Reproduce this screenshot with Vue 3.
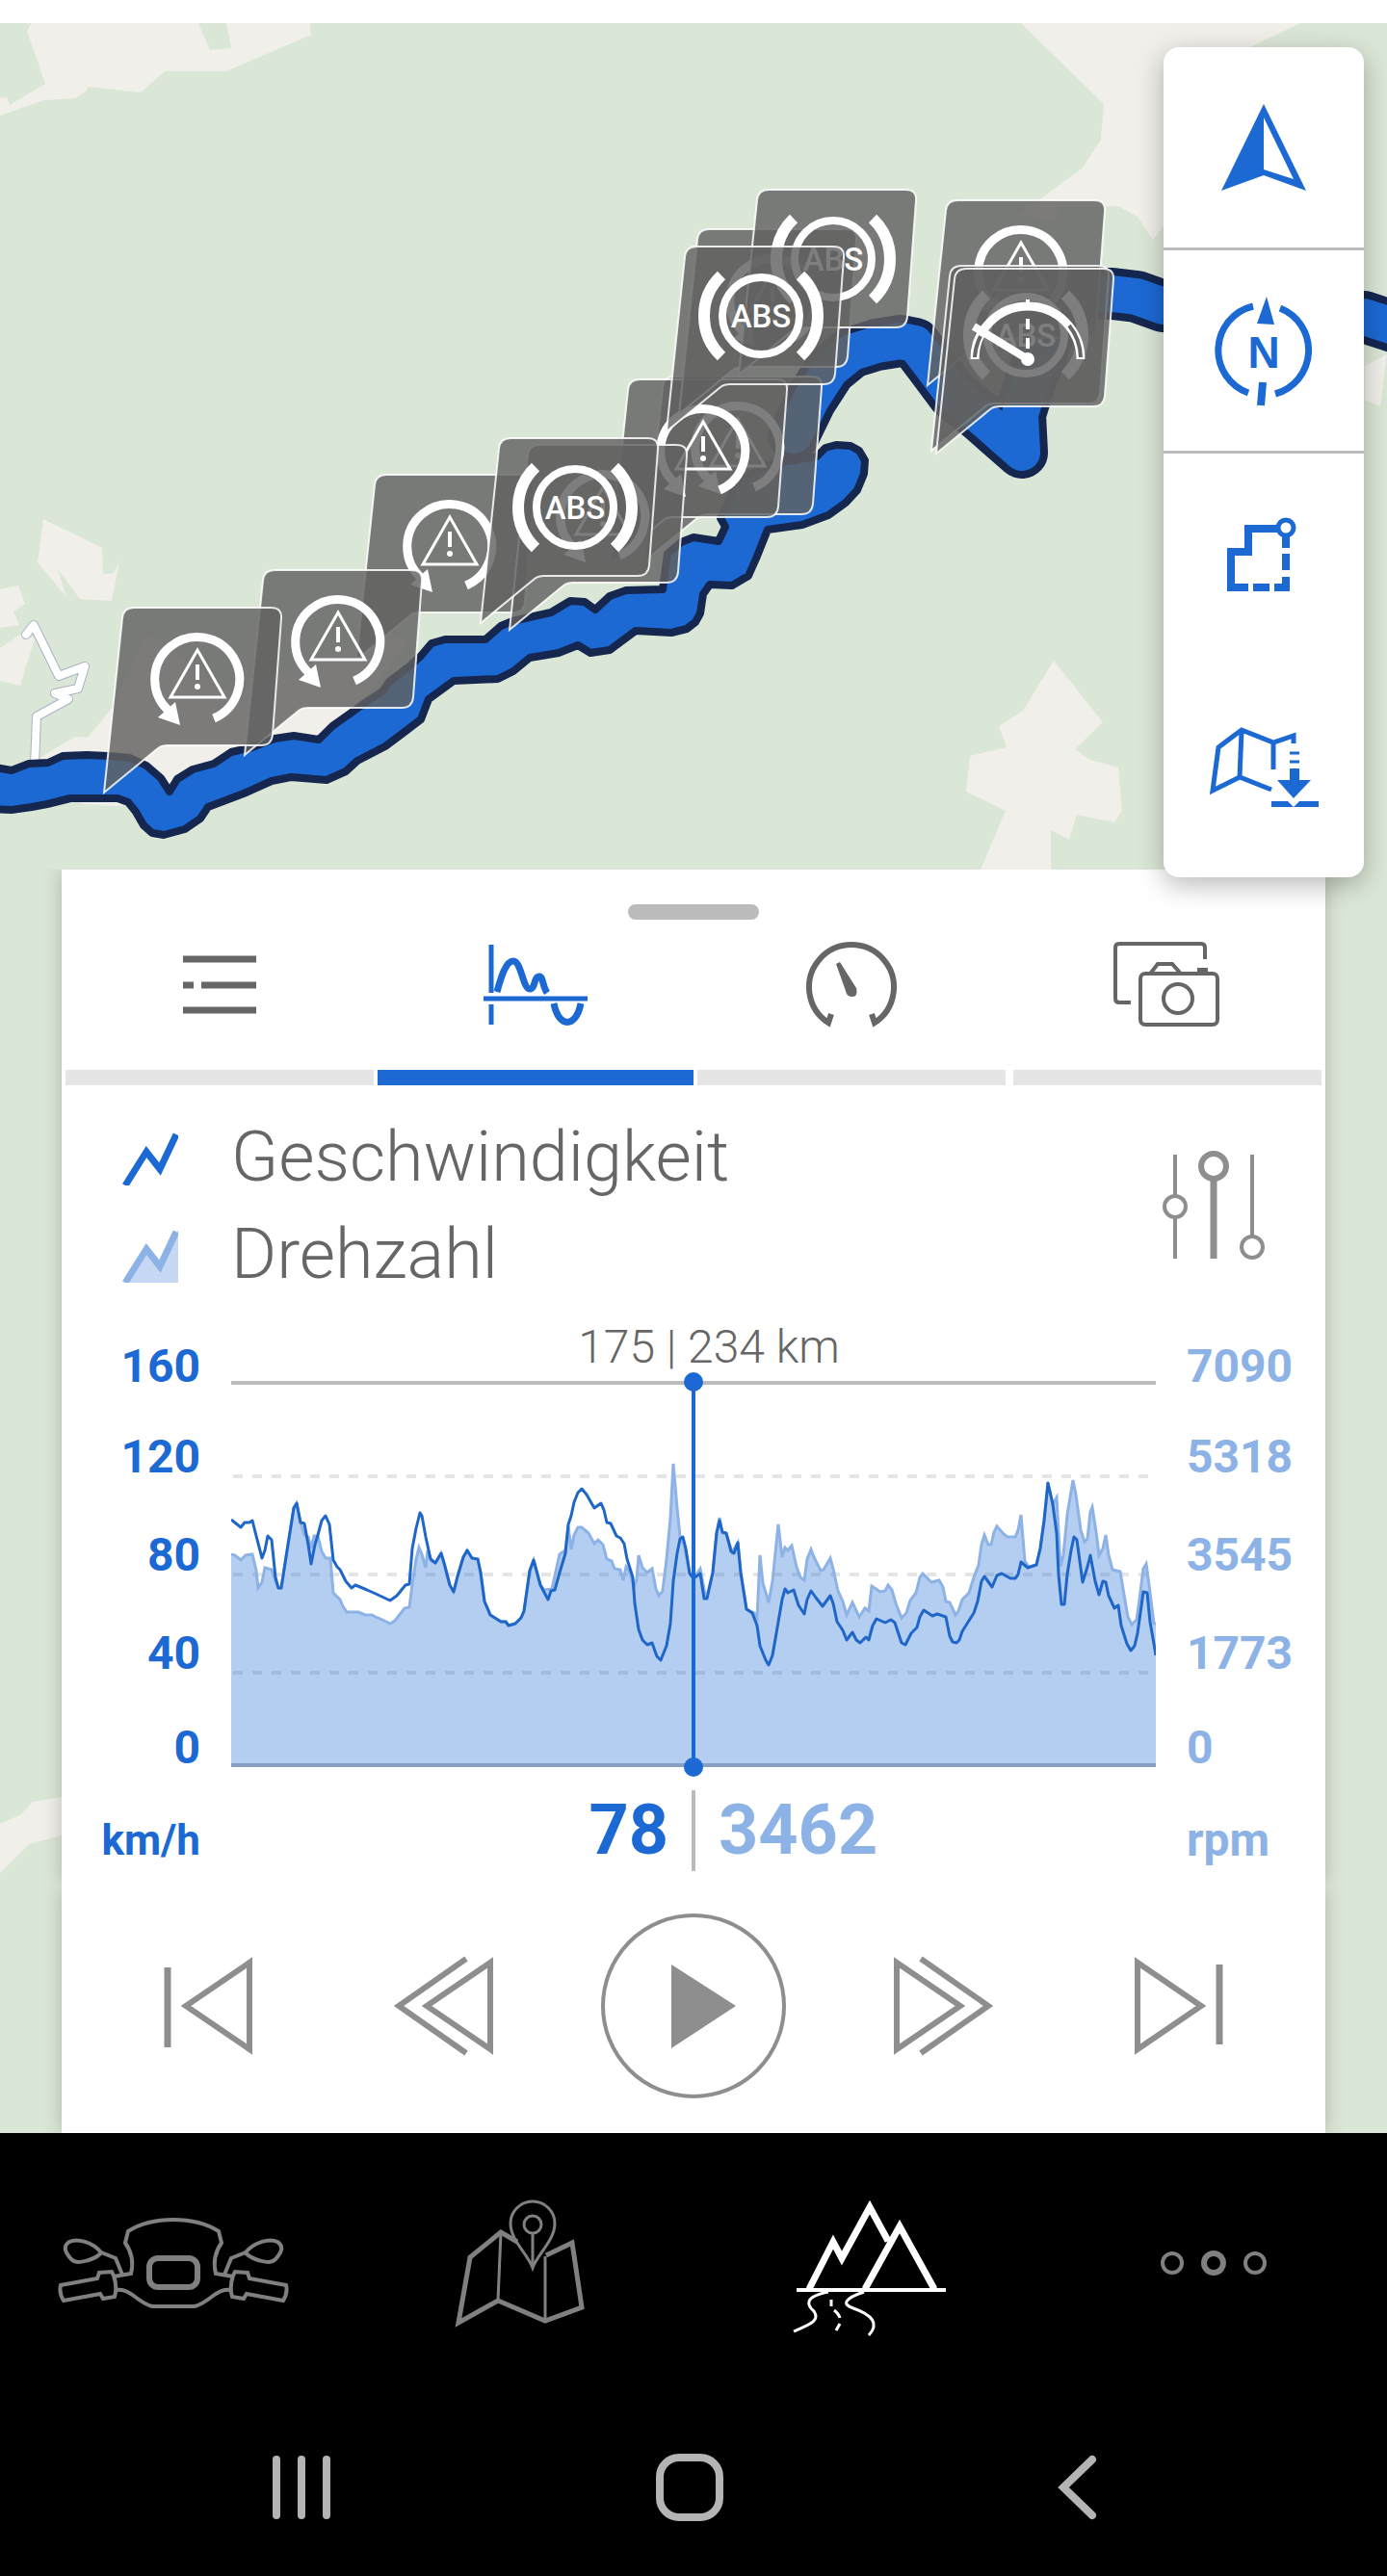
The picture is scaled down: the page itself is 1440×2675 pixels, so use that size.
<template>
  <div class="app">
    <main class="stage">
      <!-- Map -->
      <svg class="map" viewBox="0 24 1440 2191" preserveAspectRatio="xMidYMin slice" aria-label="Karte">
        <g class="land">
          <polygon v-for="(shape, i) in land" :key="i" :points="shape" />
        </g>
        <polyline class="path-edge" :points="sideRoad" />
        <polyline class="path-fill" :points="sideRoad" />
        <polyline class="route-edge" :points="upperRoute" />
        <polyline class="route-fill" :points="upperRoute" />
        <polygon class="route-main" :points="mainRoute" />

        <g v-for="(m, i) in markers" :key="'m' + i" :transform="`translate(${m.x} ${m.y})`">
          <path class="marker" d="M0 0L19-181Q20-192 31-192H173Q185-192 184-181L175-60Q174-49 163-49H66Q60-49 56-46Z" />
          <g v-if="m.type === 'warn'" class="marker-icon" transform="translate(97 -118)">
            <path stroke-width="9" d="M-30 33A44 44 0 1 1 17 41" />
            <path class="solid" d="M-18 48L-23 24L-41 40Z" />
            <path stroke-width="3" d="M0-30L28 19H-28Z" />
            <path stroke-width="4" d="M0-15V1" />
            <circle class="solid" cy="8" r="3" />
          </g>
          <g v-else-if="m.type === 'abs'" class="marker-icon" transform="translate(98 -120)">
            <circle r="40" stroke-width="8" />
            <path stroke-width="12" d="M-41-42A58 58 0 0 0-41 42M41-42A58 58 0 0 1 41 42" />
            <text y="12" text-anchor="middle">ABS</text>
          </g>
          <g v-else class="marker-icon" transform="translate(95 -98)">
            <path stroke-width="9" d="M-55 0A55 55 0 0 1 55 0" />
            <path class="gap" d="M-55-2A55 55 0 0 1-49-24M43-35A55 55 0 0 1 55-2" />
            <path stroke-width="4" stroke-dasharray="11 9" d="M0-62V-8" />
            <path stroke-width="8" d="M-56-34L0 0" />
            <circle class="solid" r="7" />
          </g>
        </g>
      </svg>

      <div class="toolbar">
        <button type="button" class="tool" aria-label="Position">
          <svg viewBox="0 0 208 208">
            <path class="blue-fill" fill-rule="evenodd" d="M104 59L60 149L104 133L148 149ZM104 73L135 137L104 127Z" />
          </svg>
        </button>
        <button type="button" class="tool" aria-label="Norden">
          <svg viewBox="0 0 208 208">
            <path class="blue-line" stroke-width="7" d="M93 58A47 47 0 0 0 88 148M121 60A47 47 0 0 1 116 149" />
            <path class="blue-fill" d="M107 48L97 76L115 77Z" />
            <path class="blue-line" stroke-width="8" d="M103 137L101 161" />
            <text class="north" x="104" y="122" text-anchor="middle">N</text>
          </svg>
        </button>
        <button type="button" class="tool tall" aria-label="Route">
          <svg viewBox="0 0 208 220">
            <path class="blue-line" stroke-width="8" d="M88 139H70V102H88V78H118" />
            <circle class="blue-line" stroke-width="5" cx="127" cy="77" r="8" />
            <path class="blue-line" stroke-width="8" d="M127 87V98M127 104V121M127 128V139M93 139H110M115 139H131" />
          </svg>
        </button>
        <button type="button" class="tool tall" aria-label="Karte herunterladen">
          <svg viewBox="0 0 208 220">
            <path class="blue-line" stroke-width="5" d="M112 129L79 116L51 130L57 85L81 67L114 80L135 73V81M81 68L79 116M114 80V108" />
            <path class="blue-line" stroke-width="3" d="M131 91H141M131 100H141" />
            <path class="blue-fill" d="M131 107H141V119H153L135 138L118 119H131Z" />
            <path class="blue-fill" d="M112 141H129L135 147L141 141H161V147H112Z" />
          </svg>
        </button>
      </div>

      <!-- Trip details -->
      <section class="sheet">
        <div class="handle"></div>
        <nav class="tabs">
          <button
            v-for="tab in tabs"
            :key="tab"
            type="button"
            class="tab"
            :class="{ active: tab === activeTab }"
            :aria-label="tab"
            @click="activeTab = tab"
          >
            <svg class="tab-icon" viewBox="0 0 120 104">
              <path v-if="tab === 'Liste'" stroke-width="7" d="M22 25H98M22 52H33M41 52H98M22 78H98" />
              <g v-else-if="tab === 'Diagramm'" stroke-width="5">
                <path d="M14 10V60M14 72V93M6 66H114" />
                <path stroke-width="7" d="M20 59C24 44 29 27 37 27C45 27 47 56 54 56C60 56 58 43 64 43C68 43 67 53 72 60M79 71C84 97 102 97 107 71" />
              </g>
              <g v-else-if="tab === 'Tacho'" stroke-width="6">
                <path d="M39 82L36 91A44 44 0 1 1 84 91L81 82" />
                <path class="needle" d="M44 30L48 28L65 55Q67 64 61 64Q55 64 54 58Z" />
              </g>
              <g v-else stroke-width="4">
                <path d="M99 25V13Q99 9 95 9H10Q6 9 6 13V66Q6 70 10 70H22" />
                <rect x="32" y="40" width="80" height="53" rx="5" />
                <path d="M43 39L50 30H65L73 39" />
                <path stroke-width="6" d="M91 37H102" />
                <circle cx="71" cy="66" r="15" />
              </g>
            </svg>
            <span class="tab-bar"></span>
          </button>
        </nav>

        <div class="legend">
          <ul class="legend-list">
            <li>
              <svg class="legend-icon" viewBox="0 0 58 58">
                <path class="blue-line" stroke-width="7" d="M3 58L25 23L39 41L56 5" />
              </svg>
              <span>Geschwindigkeit</span>
            </li>
            <li>
              <svg class="legend-icon" viewBox="0 0 58 58">
                <path class="rpm-soft" d="M3 58L25 23L39 41L58 3V58Z" />
                <path class="rpm-line" stroke-width="7" d="M3 58L25 23L39 41L56 5" />
              </svg>
              <span>Drehzahl</span>
            </li>
          </ul>
          <button type="button" class="filter" aria-label="Einstellungen">
            <svg viewBox="0 0 112 116">
              <path stroke-width="4" d="M16 5V48M16 70V113M96 5V90" />
              <path stroke-width="7" d="M56 30V113" />
              <circle stroke-width="4" cx="16" cy="59" r="11" />
              <circle stroke-width="6" cx="56" cy="17" r="13" />
              <circle stroke-width="4" cx="96" cy="101" r="11" />
            </svg>
          </button>
        </div>

        <div class="chart">
          <div class="axis axis-speed">
            <span v-for="v in speedAxis" :key="v">{{ v }}</span>
            <span class="unit">km/h</span>
          </div>
          <div class="chart-body">
            <p class="distance">175 | 234 km</p>
            <div class="plot">
              <svg viewBox="0 0 960 424" preserveAspectRatio="none">
                <path class="grid-line" d="M0 13H960M0 410H960" />
                <path class="grid-dash" d="M2 110H960M2 212H960M2 314H960" />
                <polygon class="rpm-area" :points="rpmArea" />
                <polyline class="rpm-line" stroke-width="3" :points="rpmPoints" />
                <polyline class="speed-line" :points="speedPoints" />
              </svg>
              <div class="cursor"></div>
            </div>
            <div class="reading">
              <strong class="reading-speed">78</strong>
              <i class="reading-divider"></i>
              <strong class="reading-rpm">3462</strong>
            </div>
          </div>
          <div class="axis axis-rpm">
            <span v-for="v in rpmAxis" :key="v">{{ v }}</span>
            <span>rpm</span>
          </div>
        </div>
      </section>

      <section class="player">
        <button type="button" class="skip" aria-label="Zum Anfang">
          <svg viewBox="0 0 160 104">
            <path stroke-width="7" d="M38 12V95" />
            <path stroke-width="6" d="M123 7L57 52L123 97Z" />
          </svg>
        </button>
        <button type="button" class="skip" aria-label="Zurück">
          <svg viewBox="0 0 160 104">
            <path stroke-width="6" d="M129 7L63 52L129 97Z" />
            <path stroke-width="6" d="M104 3L34 52L104 101" />
          </svg>
        </button>
        <button type="button" class="play" aria-label="Abspielen">
          <svg viewBox="0 0 192 192">
            <circle cx="96" cy="96" r="94" stroke-width="4" />
            <path class="play-fill" d="M73 53L140 96L73 140Z" />
          </svg>
        </button>
        <button type="button" class="skip" aria-label="Vor">
          <svg viewBox="0 0 160 104">
            <path stroke-width="6" d="M31 7L97 52L31 97Z" />
            <path stroke-width="6" d="M56 3L126 52L56 101" />
          </svg>
        </button>
        <button type="button" class="skip" aria-label="Zum Ende">
          <svg viewBox="0 0 160 104">
            <path stroke-width="6" d="M37 7L103 52L37 97Z" />
            <path stroke-width="7" d="M122 9V92" />
          </svg>
        </button>
      </section>
    </main>

    <footer class="bottom">
      <nav class="app-nav">
        <a href="#" aria-label="Cockpit">
          <svg viewBox="0 0 240 160" stroke-width="4">
            <path d="M58 93L76 90C79 78 77 68 70 58L73 46Q92 34 120 34Q148 34 167 46L170 58C163 68 161 78 164 90L182 93" />
            <path d="M61 107C76 105 82 120 98 124H142C158 120 164 105 179 107" />
            <rect x="95" y="74" width="50" height="30" rx="9" stroke-width="6" />
            <g v-for="side in ['', 'translate(240 0) scale(-1 1)']" :key="side" :transform="side">
              <path d="M45 68C36 57 20 53 12 57C4 62 9 69 13 74C18 80 24 78 32 76C38 74 43 72 45 68L60 74L67 91" />
              <path d="M3 102L41 95L43 89L56 88L58 92Q62 104 59 114L47 116L44 111L6 118Q1 110 3 102Z" />
            </g>
          </svg>
        </a>
        <a href="#" aria-label="Navigation">
          <svg viewBox="0 0 240 160" stroke-width="5">
            <path d="M117 57L100 47L68 73L56 141L97 118L146 139L184 125L174 58L147 71" />
            <path stroke-width="3" d="M100 47L97 118M146 72V139M133 48V84M133 84C128 70 110 55 110 38A23 23 0 0 1 156 38C156 55 138 70 133 84Z" />
            <circle stroke-width="3" cx="133" cy="39" r="9" />
          </svg>
        </a>
        <a href="#" class="current" aria-label="Touren">
          <svg viewBox="0 0 240 160" stroke-width="7">
            <path d="M60 106L85 57L94 74L123 21L142 56M118 106L154 41L190 106" />
            <path stroke-width="4" d="M47 107H202" />
            <path stroke-width="3" d="M80 109C54 114 58 123 65 129C72 139 60 143 44 150M117 109C96 116 94 122 106 126C126 133 133 142 122 154M83 117V124M86 128Q91 132 92 136M92 142L88 149" />
          </svg>
        </a>
        <a href="#" aria-label="Mehr">
          <svg viewBox="0 0 240 160">
            <circle cx="77" cy="79" r="10" stroke-width="4" />
            <circle cx="120" cy="79" r="10" stroke-width="6" />
            <circle cx="163" cy="79" r="10" stroke-width="4" />
          </svg>
        </a>
      </nav>
      <div class="system-nav">
        <button type="button" aria-label="Letzte Apps">
          <svg viewBox="0 0 80 80"><path d="M14 11V69M40 11V69M66 11V69" /></svg>
        </button>
        <button type="button" aria-label="Startseite">
          <svg viewBox="0 0 80 80"><rect x="9" y="9" width="62" height="62" rx="20" /></svg>
        </button>
        <button type="button" aria-label="Zurück">
          <svg viewBox="0 0 80 80"><path d="M55 11L25 40L55 69" /></svg>
        </button>
      </div>
    </footer>
  </div>
</template>

<script setup>
import { ref } from 'vue';

const tabs = ['Liste', 'Diagramm', 'Tacho', 'Fotos'];
const activeTab = ref('Diagramm');

const speedAxis = [160, 120, 80, 40, 0];
const rpmAxis = [7090, 5318, 3545, 1773, 0];

const land = [
  '33,24 28,32 47,87 10,109 7,101 0,102 0,120 46,104 78,102 90,94 92,90 146,96 171,74 235,74 323,36 322,24 235,24 240,50 218,52 206,24',
  '45,539 106,569 107,596 118,595 124,583 116,624 83,622 60,591 69,620 39,584',
  '0,612 19,608 26,627 14,635 20,649 0,652',
  '0,673 24,657 36,663 21,712 0,707',
  '41,787 78,765 91,766 118,733 151,660 165,665 240,720 404,657 425,667 350,760 250,830 118,837 86,835 60,820',
  '1060,24 1350,24 1298,49 1300,200 1208,235 1197,249 1181,225 1161,214 1101,215 1093,230 1056,223 1081,206 1123,175 1133,160 1143,145 1146,108',
  '1417,380 1440,368 1433,422 1417,415',
  '1094,686 1145,750 1116,778 1132,789 1161,797 1165,842 1157,854 1118,846 1110,872 1091,862 1091,903 1018,903 1044,842 1003,822 1007,785 1045,776 1037,754 1062,738',
  '0,1894 22,1884 34,1871 64,1866 64,1906 30,1915 0,1945',
];

const sideRoad = '27,659 35,649 61,702 88,692 81,715 57,720 71,726 38,744 36,795';

const upperRoute =
  '824,452 842,415 862,384 884,366 910,358 935,354 950,357 966,378 990,410 1020,434 1061,470 1059,430 1070,395 1090,345 1120,305 1155,305 1180,308 1208,318 1300,330 1416,329 1450,340';

const mainRoute =
  '-10,796 12,800 30,793 50,792 65,785 90,784 112,785 135,787 152,795 167,808 176,822 184,809 200,799 222,793 240,781 262,776 285,767 305,764 331,768 345,754 362,742 380,729 397,718 404,708 425,692 437,681 448,668 462,664 504,664 520,650 532,645 572,636 592,624 607,625 618,633 633,619 650,613 688,612 693,575 707,563 720,558 746,562 753,547 748,538 765,500 800,482 848,474 857,465 868,462 883,463 892,468 898,478 897,492 890,509 878,522 860,535 833,545 797,550 793,560 785,580 777,598 760,608 737,607 730,617 727,637 722,646 713,653 697,657 660,655 633,675 613,678 600,670 580,678 550,683 533,697 517,705 471,707 445,726 437,747 420,760 400,775 371,790 359,801 339,810 302,807 282,811 253,824 216,838 208,850 192,861 170,867 158,865 149,857 141,843 133,833 122,829 73,829 49,835 33,838 12,841 -10,840';

// position is the tip of the speech bubble
const markers = [
  { x: 370, y: 685, type: 'warn' },
  { x: 254, y: 784, type: 'warn' },
  { x: 108, y: 823, type: 'warn' },
  { x: 669, y: 583, type: 'warn' },
  { x: 633, y: 586, type: 'warn' },
  { x: 529, y: 654, type: 'warn' },
  { x: 499, y: 647, type: 'abs' },
  { x: 705, y: 430, type: 'warn' },
  { x: 767, y: 389, type: 'abs' },
  { x: 692, y: 448, type: 'abs' },
  { x: 963, y: 400, type: 'warn' },
  { x: 967, y: 468, type: 'abs' },
  { x: 972, y: 471, type: 'speed' },
];

const rpmPoints =
  '0,191 4,192 10,197 15,192 22,191 26,208 28,226 32,220 35,205 42,207 46,219 49,226 52,226 59,181 65,143 68,138 72,158 76,171 80,173 83,185 86,172 90,172 94,188 98,195 103,195 106,231 113,238 116,245 120,251 132,251 139,254 146,254 152,257 159,260 165,263 170,260 180,247 185,246 189,215 192,196 195,184 198,191 202,205 204,187 208,198 212,200 218,190 221,200 227,223 231,230 235,214 241,194 245,187 250,195 256,196 259,210 263,240 269,254 280,261 285,261 288,265 295,263 301,257 304,250 310,208 314,197 321,223 325,228 333,227 341,191 347,187 350,162 353,186 356,171 360,163 364,163 371,169 377,180 381,176 386,181 390,196 395,198 398,206 404,207 407,218 410,204 414,210 418,226 421,217 423,192 427,205 432,210 437,206 441,227 444,234 448,229 452,196 456,154 459,97 463,143 466,172 470,181 476,211 480,216 487,206 493,238 500,210 504,169 507,153 510,169 514,170 520,189 526,179 529,210 535,248 543,252 546,257 549,192 552,221 558,241 562,219 568,160 572,194 575,184 578,187 582,182 587,204 591,215 595,218 598,196 602,186 605,194 612,208 615,207 622,195 625,206 630,229 635,240 639,254 645,241 652,256 658,247 662,250 665,224 674,230 679,229 682,223 686,228 690,242 696,257 701,252 705,239 711,231 715,215 718,211 727,220 735,218 739,225 742,240 746,241 752,254 755,250 759,238 766,231 771,215 776,202 779,181 782,171 786,181 789,181 792,168 795,162 802,170 806,173 814,173 817,166 820,150 824,198 828,204 836,202 840,185 844,156 848,117 853,139 857,132 861,204 864,192 868,150 874,114 877,129 882,166 886,178 889,175 892,147 894,142 898,168 901,192 905,185 908,171 911,192 915,207 923,209 927,233 931,256 935,264 940,259 943,238 947,206 950,201 953,223 958,263 960,263';

const speedPoints =
  '0,155 10,163 14,158 19,158 22,156 25,168 32,195 35,187 38,172 42,176 46,215 49,226 52,226 59,181 65,143 68,138 72,158 76,159 80,181 83,201 87,181 90,171 94,156 98,151 102,160 106,197 110,204 113,207 119,219 125,226 129,223 141,228 150,232 165,239 172,234 181,223 185,222 188,185 192,164 196,148 198,151 202,173 207,196 212,200 218,190 221,200 227,223 231,230 235,214 241,194 245,187 250,195 256,196 259,210 263,240 269,254 280,261 285,261 288,265 295,263 301,257 304,250 310,208 314,197 321,223 329,238 332,229 336,228 341,210 347,190 350,160 353,151 356,137 360,127 364,123 369,129 377,143 384,138 387,145 390,158 394,159 400,172 404,174 408,180 411,196 417,215 419,242 423,269 427,280 432,285 437,283 442,297 446,301 452,286 456,263 459,219 463,190 466,175 469,173 472,185 476,211 480,216 487,211 491,237 494,237 500,210 504,169 507,156 510,168 514,169 519,188 522,190 526,179 529,210 535,248 541,252 546,265 549,286 555,301 558,306 562,296 566,273 572,238 575,227 578,231 584,228 589,244 595,253 598,238 602,229 607,236 614,245 622,234 625,242 629,261 635,270 639,280 645,272 649,280 653,283 659,277 662,280 666,265 670,258 679,262 685,259 689,262 696,283 700,285 706,273 712,267 715,256 719,249 728,255 733,253 742,256 746,276 749,282 753,283 756,280 759,271 771,252 775,240 779,219 782,214 790,225 795,213 800,211 809,216 814,216 817,212 820,199 827,205 836,202 840,185 844,156 848,117 853,139 857,169 859,212 862,243 865,243 868,212 872,187 875,173 878,176 884,220 889,204 892,192 897,219 901,233 905,219 908,220 911,234 917,247 921,244 924,265 930,284 934,291 938,286 941,273 947,230 951,231 954,261 958,284 960,296';

const rpmArea = `0,412 ${rpmPoints} 960,412`;
</script>

<style>
body {
  margin: 0;
  background: #000;
}
</style>

<style scoped>
.app {
  font-family: Roboto, "Liberation Sans", sans-serif;
  color: #666;
  background: #fff;
  padding-top: 24px;
}

button {
  border: 0;
  padding: 0;
  background: none;
  cursor: pointer;
}

svg {
  display: block;
  fill: none;
}

.stage {
  position: relative;
  overflow: hidden;
  background: #dbe7d6;
}

.map {
  position: absolute;
  top: 0;
  left: 0;
  width: 100%;
  height: 100%;
}

.land {
  fill: #f0efea;
}

.path-edge {
  stroke: #a9b0c2;
  stroke-width: 10;
  stroke-linecap: round;
  stroke-linejoin: round;
}

.path-fill {
  stroke: #fff;
  stroke-width: 8;
  stroke-linecap: round;
  stroke-linejoin: round;
}

.route-edge {
  stroke: #15264f;
  stroke-width: 54;
  stroke-linecap: round;
  stroke-linejoin: round;
}

.route-fill {
  stroke: #1c69d4;
  stroke-width: 38;
  stroke-linecap: round;
  stroke-linejoin: round;
}

.route-main {
  fill: #1c69d4;
  stroke: #15264f;
  stroke-width: 8;
  stroke-linejoin: round;
}

.marker {
  fill: rgba(97, 97, 97, 0.82);
  stroke: rgba(255, 255, 255, 0.85);
  stroke-width: 2;
}

.marker-icon {
  stroke: #fff;
}

.marker-icon .solid {
  fill: #fff;
  stroke: none;
}

.marker-icon .gap {
  stroke: #666;
  stroke-width: 4;
}

.marker-icon text {
  font-size: 33px;
  font-weight: 500;
  fill: #fff;
  stroke: none;
}

.toolbar {
  position: absolute;
  top: 25px;
  right: 24px;
  width: 208px;
  z-index: 2;
  background: #fff;
  border-radius: 16px;
  box-shadow: 0 8px 28px rgba(0, 0, 0, 0.28);
}

.tool {
  display: block;
  width: 100%;
  height: 208px;
  border-bottom: 3px solid #bbb;
  box-sizing: content-box;
}

.tool.tall {
  height: 220px;
  border-bottom: 0;
}

.blue-fill {
  fill: #1c69d4;
}

.blue-line {
  stroke: #1c69d4;
}

.north {
  font-size: 46px;
  font-weight: 700;
  fill: #1c69d4;
}

/* only the side shadows show, so the two cards read as one column */
.sheet,
.player {
  position: relative;
  margin: 0 64px;
  background: #fff;
  box-shadow: 0 0 20px rgba(0, 0, 0, 0.22);
  clip-path: inset(0 -30px);
}

.sheet {
  margin-top: 879px;
  padding: 36px 0 16px;
}

.handle {
  width: 136px;
  height: 16px;
  margin: 0 auto;
  border-radius: 8px;
  background: #bbb;
}

.tabs {
  display: flex;
}

.tab {
  flex: 1;
  padding-top: 16px;
}

.tab-icon {
  width: 120px;
  height: 104px;
  margin: 0 auto 36px;
  stroke: #666;
}

.needle {
  fill: #666;
  stroke: none;
}

.tab-bar {
  display: block;
  height: 16px;
  margin: 0 4px;
  background: #e5e5e5;
}

.tab.active .tab-icon {
  stroke: #1c69d4;
}

.tab.active .tab-bar {
  margin: 0;
  background: #1c69d4;
}

.legend {
  display: flex;
  align-items: center;
  justify-content: space-between;
  padding: 24px 60px 22px 63px;
}

.legend-list {
  margin: 0;
  padding: 0;
  list-style: none;
}

.legend-list li {
  display: flex;
  align-items: center;
  gap: 55px;
  font-size: 72px;
  font-weight: 300;
  line-height: 101px;
}

.legend-icon {
  width: 58px;
  height: 58px;
}

.rpm-line {
  stroke: #8db2e6;
}

.rpm-soft {
  fill: #c6d8f3;
}

.filter svg {
  width: 112px;
  height: 116px;
  stroke: #8e8e8e;
}

.chart {
  display: grid;
  grid-template-columns: 176px 1fr 176px;
}

.axis {
  display: grid;
  grid-template-rows: 94px 102px 102px 98px 96px 48px;
  align-content: start;
  padding-top: 20px;
  font-size: 48px;
  font-weight: 700;
  line-height: 48px;
}

.axis-speed {
  padding-right: 32px;
  text-align: right;
  color: #1c69d4;
}

.axis-rpm {
  padding-left: 32px;
  color: #8db2e6;
}

.unit {
  font-size: 44px;
}

.distance {
  margin: 0;
  padding-left: 32px;
  text-align: center;
  font-size: 48px;
  font-weight: 300;
  line-height: 48px;
}

.plot {
  position: relative;
}

.plot svg {
  width: 100%;
  height: 424px;
}

.grid-line {
  stroke: #bbb;
  stroke-width: 4;
}

.grid-dash {
  stroke: #e5e5e5;
  stroke-width: 4;
  stroke-dasharray: 10 10;
}

.rpm-area {
  fill: #1c69d4;
  fill-opacity: 0.33;
}

.speed-line {
  stroke: #1f66c9;
  stroke-width: 3;
  stroke-linejoin: round;
}

.cursor {
  position: absolute;
  top: 12px;
  bottom: 12px;
  left: 50%;
  width: 4px;
  margin-left: -2px;
  background: #1c69d4;
}

.cursor::before,
.cursor::after {
  content: "";
  position: absolute;
  left: -8px;
  width: 20px;
  height: 20px;
  border-radius: 50%;
  background: #1c69d4;
}

.cursor::before {
  top: -10px;
}

.cursor::after {
  bottom: -10px;
}

.reading {
  display: grid;
  grid-template-columns: 1fr 4px 1fr;
  gap: 24px;
  margin-top: 12px;
  font-size: 72px;
  line-height: 84px;
}

.reading-speed {
  text-align: right;
  color: #1c69d4;
}

.reading-divider {
  background: #bbb;
}

.reading-rpm {
  color: #8db2e6;
}

.player {
  display: flex;
  align-items: center;
  justify-content: space-between;
  padding: 28px 72px 36px;
}

.player svg {
  stroke: #8e8e8e;
}

.skip svg {
  width: 160px;
  height: 104px;
}

.play svg {
  width: 192px;
  height: 192px;
}

.play-fill {
  fill: #8e8e8e;
  stroke: none;
}

.bottom {
  background: #000;
}

.app-nav {
  display: grid;
  grid-template-columns: repeat(4, 1fr);
  padding: 56px 0 112px;
}

.app-nav svg {
  width: 240px;
  height: 160px;
  margin: 0 auto;
  stroke: #808080;
}

.app-nav .current svg {
  stroke: #fff;
}

.system-nav {
  display: grid;
  grid-template-columns: repeat(3, 1fr);
  padding: 0 120px 52px 112px;
}

.system-nav svg {
  width: 80px;
  height: 80px;
  margin: 0 auto;
  stroke: #b4b4b4;
  stroke-width: 8;
  stroke-linecap: round;
}
</style>
